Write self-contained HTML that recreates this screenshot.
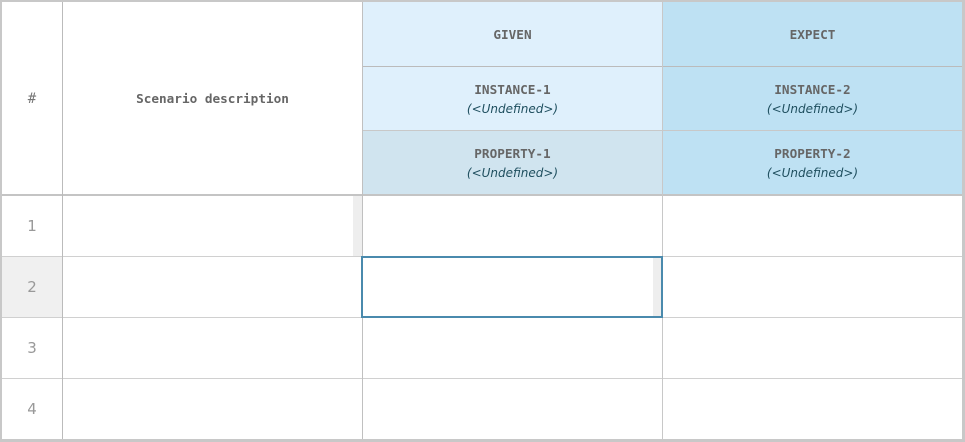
<!DOCTYPE html>
<html><head><meta charset="utf-8"><style>
*{margin:0;padding:0;box-sizing:border-box}
body{width:965px;height:442px;background:#fff;position:relative;overflow:hidden;font-family:"Liberation Sans",sans-serif}
.a{position:absolute}
.h{position:absolute;display:flex;flex-direction:column;align-items:center;justify-content:center;text-align:center}
.m{font-family:"DejaVu Sans Mono","Liberation Mono",monospace;font-weight:bold;font-size:12.7px;color:#666}
.u{font-family:"DejaVu Sans","Liberation Sans",sans-serif;font-style:italic;font-size:12px;color:#1f4f5f;margin-top:5px}
.n{font-family:"DejaVu Sans",sans-serif;font-size:15px;color:#999}
.vl{position:absolute;width:1px;background:#c8c8c8}
.hl{position:absolute;height:1px;background:#d0d0d0}
</style></head><body>
<div class="a" style="left:363px;top:2px;width:299px;height:129px;background:#dff0fc"></div>
<div class="a" style="left:363px;top:131px;width:299px;height:64px;background:#d0e4ef"></div>
<div class="a" style="left:663px;top:2px;width:299px;height:193px;background:#bee1f3"></div>
<div class="a" style="left:2px;top:257px;width:60px;height:60px;background:#f0f0f0"></div>
<div class="a" style="left:353px;top:196px;width:9px;height:60px;background:#eeeeee"></div>

<div class="hl" style="left:363px;top:66px;width:600px;background:#bbb"></div>
<div class="hl" style="left:363px;top:130px;width:600px;background:#c8c8c8"></div>
<div class="hl" style="left:2px;top:194px;width:961px;height:2px;background:#c4c4c4"></div>
<div class="hl" style="left:2px;top:256px;width:961px"></div>
<div class="hl" style="left:2px;top:317px;width:961px"></div>
<div class="hl" style="left:2px;top:378px;width:961px"></div>
<div class="vl" style="left:62px;top:2px;height:438px;background:#bbb"></div>
<div class="vl" style="left:362px;top:2px;height:438px;background:#c0c0c0"></div>
<div class="vl" style="left:662px;top:2px;height:438px;background:#c8c8c8"></div>

<div class="a" style="left:361px;top:256px;width:302px;height:62px;border:2px solid #4a8aad;background:#fff"></div>
<div class="a" style="left:653px;top:258px;width:8px;height:58px;background:#eeeeee"></div>

<div class="a" style="left:0;top:0;width:965px;height:442px;border-style:solid;border-color:#c8c8c8;border-width:2px 3px 3px 2px"></div>

<div class="h m" style="left:2px;top:2px;width:60px;height:193px;font-weight:normal;font-size:14px;color:#777">#</div>
<div class="h m" style="left:63px;top:2px;width:299px;height:193px">Scenario description</div>
<div class="h m" style="left:363px;top:2px;width:299px;height:64px">GIVEN</div>
<div class="h m" style="left:663px;top:2px;width:299px;height:64px">EXPECT</div>
<div class="h" style="left:363px;top:67px;width:299px;height:64px"><span class="m">INSTANCE-1</span><span class="u">(&lt;Undefined&gt;)</span></div>
<div class="h" style="left:363px;top:131px;width:299px;height:64px"><span class="m">PROPERTY-1</span><span class="u">(&lt;Undefined&gt;)</span></div>
<div class="h" style="left:663px;top:67px;width:299px;height:64px"><span class="m">INSTANCE-2</span><span class="u">(&lt;Undefined&gt;)</span></div>
<div class="h" style="left:663px;top:131px;width:299px;height:64px"><span class="m">PROPERTY-2</span><span class="u">(&lt;Undefined&gt;)</span></div>

<div class="h n" style="left:2px;top:196px;width:60px;height:60px">1</div>
<div class="h n" style="left:2px;top:257px;width:60px;height:60px">2</div>
<div class="h n" style="left:2px;top:318px;width:60px;height:60px">3</div>
<div class="h n" style="left:2px;top:379px;width:60px;height:60px">4</div>
</body></html>
